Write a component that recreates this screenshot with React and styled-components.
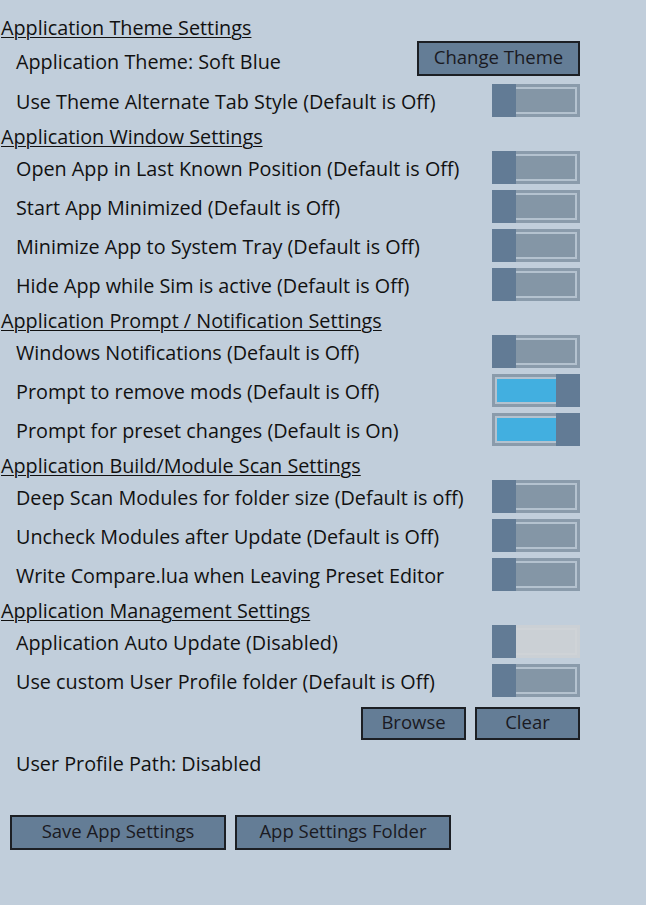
import React from "react";
import styled, { createGlobalStyle } from "styled-components";

const GlobalStyle = createGlobalStyle`
	html, body {
		margin: 0;
		padding: 0;
		background: #c1cedb;
	}
	body {
		font-family: "Open Sans", "Noto Sans", sans-serif;
		color: #111;
	}
`;

const sections = [
	{
		title: "Application Theme Settings",
		rows: [
			{ label: "Application Theme: Soft Blue", control: "theme" },
			{ label: "Use Theme Alternate Tab Style (Default is Off)", control: "off" },
		],
	},
	{
		title: "Application Window Settings",
		rows: [
			{ label: "Open App in Last Known Position (Default is Off)", control: "off" },
			{ label: "Start App Minimized (Default is Off)", control: "off" },
			{ label: "Minimize App to System Tray (Default is Off)", control: "off" },
			{ label: "Hide App while Sim is active (Default is Off)", control: "off" },
		],
	},
	{
		title: "Application Prompt / Notification Settings",
		rows: [
			{ label: "Windows Notifications (Default is Off)", control: "off" },
			{ label: "Prompt to remove mods (Default is Off)", control: "on" },
			{ label: "Prompt for preset changes (Default is On)", control: "on" },
		],
	},
	{
		title: "Application Build/Module Scan Settings",
		rows: [
			{ label: "Deep Scan Modules for folder size (Default is off)", control: "off" },
			{ label: "Uncheck Modules after Update (Default is Off)", control: "off" },
			{ label: "Write Compare.lua when Leaving Preset Editor", control: "off" },
		],
	},
	{
		title: "Application Management Settings",
		rows: [
			{ label: "Application Auto Update (Disabled)", control: "disabled" },
			{ label: "Use custom User Profile folder (Default is Off)", control: "off" },
		],
	},
];

const Page = styled.div`
	width: 646px;
	min-height: 905px;
	box-sizing: border-box;
	padding: 11px 66px 0 0;
	display: flex;
	flex-direction: column;
`;

const SectionTitle = styled.div`
	height: 28px;
	box-sizing: border-box;
	padding: 6px 0 0 1px;
	line-height: 22px;
	font-size: 19.8px;
	white-space: nowrap;
	text-decoration: underline;
	text-decoration-thickness: 1px;
	text-underline-offset: 2px;
`;

const Row = styled.div`
	height: ${({ $tall }) => ($tall ? "42px" : "39px")};
	display: flex;
	align-items: center;
	justify-content: space-between;
	padding-left: 16px;
`;

const Label = styled.span`
	font-size: 19.8px;
	line-height: 24px;
	white-space: nowrap;
	margin-top: 3px;
`;

const Button = styled.button`
	height: ${({ $tall }) => ($tall ? "35px" : "33px")};
	width: ${({ $w }) => $w}px;
	box-sizing: border-box;
	background: #647d96;
	border: 2px solid #1c1f24;
	font-family: inherit;
	font-size: 18.5px;
	line-height: 1;
	color: #1a1a22;
	padding: 0 0 2px;
	cursor: pointer;
`;

const ThemeButton = styled(Button)`
	align-self: flex-start;
	margin-top: 2px;
`;

const Toggle = styled.div`
	width: 88px;
	height: 33px;
	box-sizing: border-box;
	display: flex;
	flex-direction: ${({ $on }) => ($on ? "row-reverse" : "row")};
	background: ${({ $disabled }) => ($disabled ? "#cbd0d5" : "#8a9bab")};
`;

const Thumb = styled.div`
	width: 24px;
	background: #627b95;
`;

const Track = styled.div`
	flex: 1;
	margin: 3px;
	margin-${({ $on }) => ($on ? "right" : "left")}: 0;
	border: 2px solid ${({ $disabled }) => ($disabled ? "#cfd3d7" : "#b4c2cf")};
	border-${({ $on }) => ($on ? "right" : "left")}: none;
	background: ${({ $on, $disabled }) =>
		$disabled ? "#cbd0d5" : $on ? "#42afe0" : "#8496a6"};
`;

const ButtonRow = styled.div`
	display: flex;
	justify-content: flex-end;
	gap: 9px;
	padding-top: 7px;
	height: 40px;
	box-sizing: border-box;
`;

const PathRow = styled.div`
	height: 46px;
	box-sizing: border-box;
	padding: 0 0 0 16px;
	display: flex;
	align-items: center;
	font-size: 19.8px;
`;

const Footer = styled.div`
	display: flex;
	gap: 9px;
	padding: 29px 0 0 10px;
`;

const Switch = ({ state }) => {
	const on = state === "on";
	const disabled = state === "disabled";
	return (
		<Toggle $on={on} $disabled={disabled}>
			<Thumb />
			<Track $on={on} $disabled={disabled} />
		</Toggle>
	);
};

export default function App() {
	return (
		<>
			<GlobalStyle />
			<Page>
				{sections.map((s) => (
					<React.Fragment key={s.title}>
						<SectionTitle>{s.title}</SectionTitle>
						{s.rows.map((r) => (
							<Row key={r.label} $tall={r.control === "theme"}>
								<Label>{r.label}</Label>
								{r.control === "theme" ? (
									<ThemeButton $tall $w={163}>
										Change Theme
									</ThemeButton>
								) : (
									<Switch state={r.control} />
								)}
							</Row>
						))}
					</React.Fragment>
				))}
				<ButtonRow>
					<Button $w={105}>Browse</Button>
					<Button $w={105}>Clear</Button>
				</ButtonRow>
				<PathRow>User Profile Path: Disabled</PathRow>
				<Footer>
					<Button $tall $w={216}>
						Save App Settings
					</Button>
					<Button $tall $w={216}>
						App Settings Folder
					</Button>
				</Footer>
			</Page>
		</>
	);
}
